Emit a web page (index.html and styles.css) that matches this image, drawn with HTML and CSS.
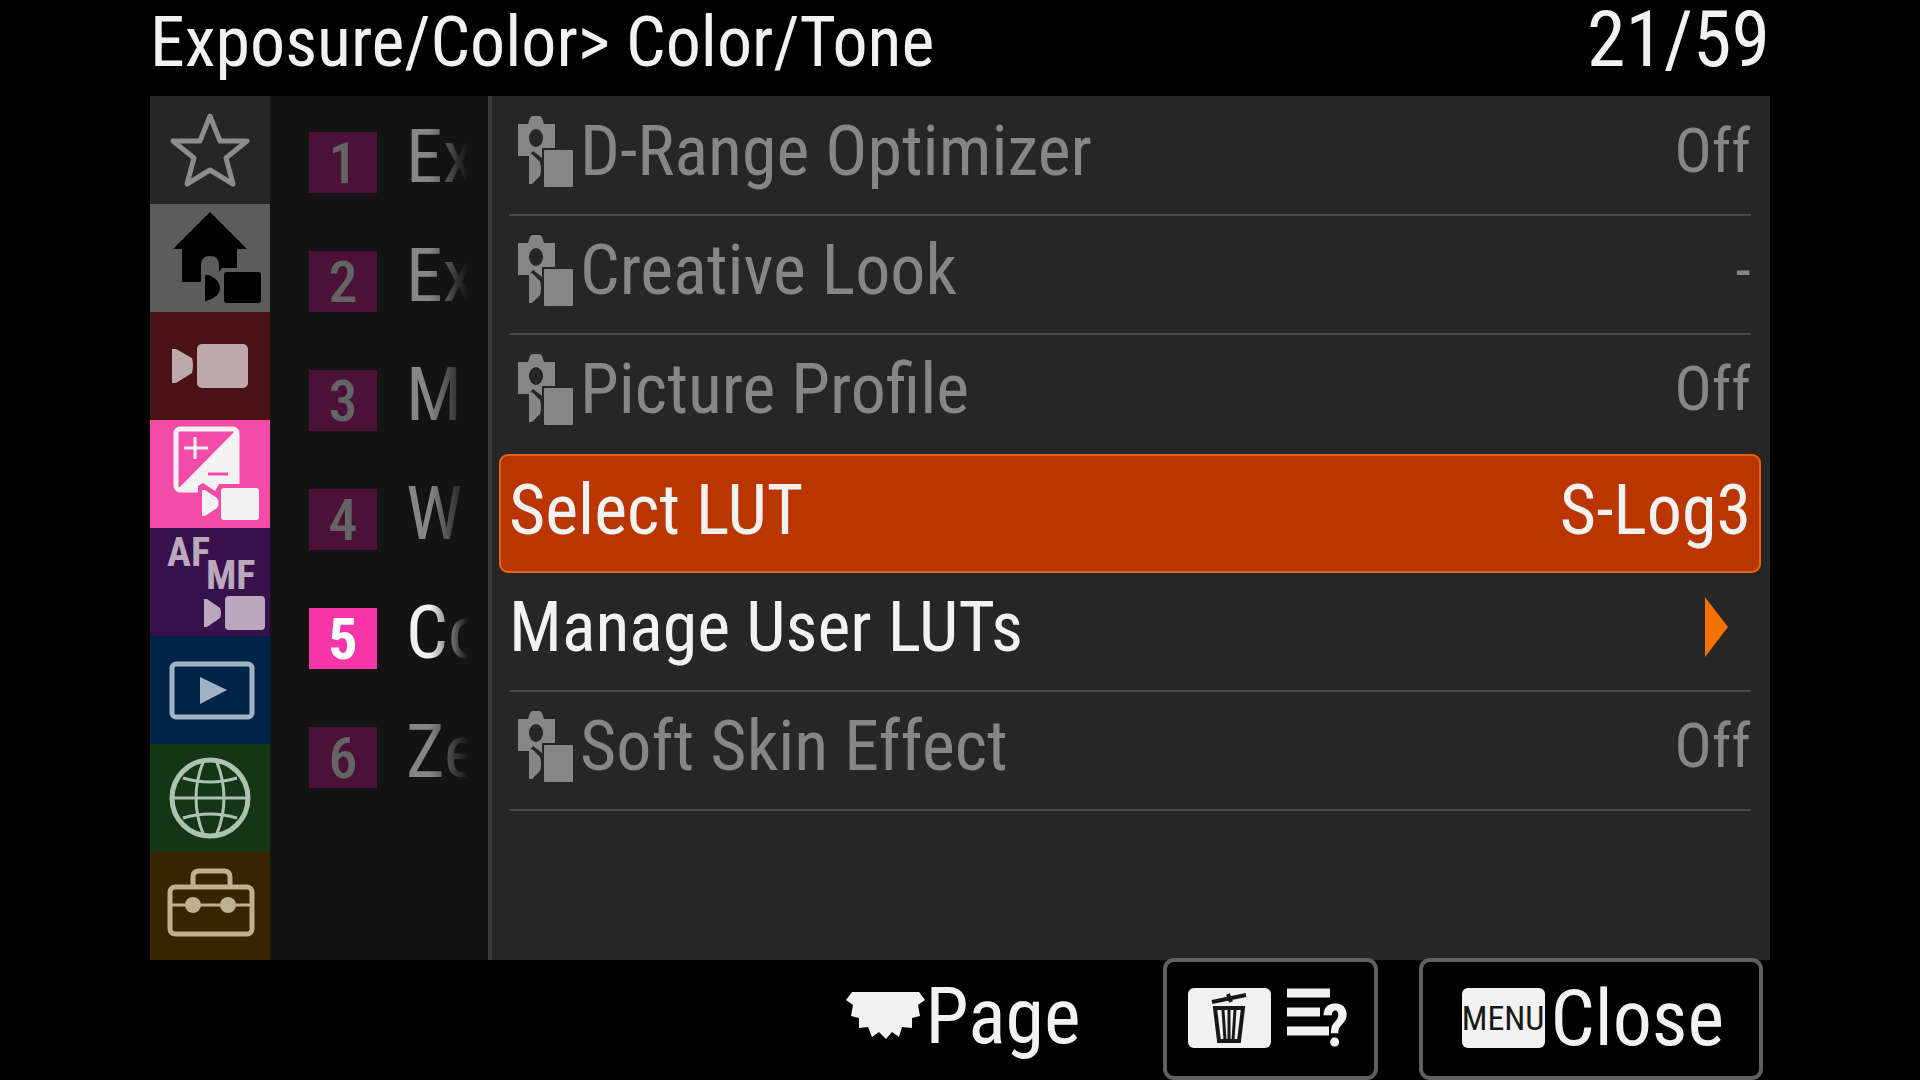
FILE: index.html
```html
<!DOCTYPE html>
<html lang="en">

<head>
    <meta charset="UTF-8">
    <meta name="viewport" content="width=device-width, initial-scale=1.0">
    <title>Exposure/Color</title>
    <link rel="stylesheet" href="styles.css">
</head>

<body>

    <!-- shared shapes -->
    <svg class="defs" aria-hidden="true">
        <symbol id="still-movie" viewBox="0 0 60 74">
            <path d="M3 10h10l2-6q1-2 3-2h6q2 0 3 2l2 6h11v24H27v10l-9-7-4 5H3z" fill="currentColor" />
            <ellipse cx="21" cy="24" rx="7" ry="9" fill="#262626" />
            <path d="M14 41l3-1 8 8q2 7 0 14l-8 8h-3z" fill="currentColor" />
            <rect x="29" y="36" width="29" height="37" rx="1" fill="currentColor" />
        </symbol>
    </svg>

    <div class="screen">
        <header class="header">
            <h1>Exposure/Color&gt; Color/Tone</h1>
            <span>21/59</span>
        </header>

        <main class="main">
            <nav class="tabs">
                <button class="tab tab-star" aria-label="My Menu">
                    <svg viewBox="0 0 120 108">
                        <path d="M60 20l10 25h27L76 62l7 26-23-14-23 14 7-26L23 45h27z" fill="none" stroke="currentColor" stroke-width="5" stroke-linejoin="round" />
                    </svg>
                </button>
                <button class="tab tab-home" aria-label="Main">
                    <svg viewBox="0 0 120 108">
                        <path d="M60 8l37 37H87v19H72l-3 4V61q0-9-9-9t-9 9v17H32V45H23z" fill="currentColor" />
                        <path d="M55 71l4 0q11 5 11 13t-11 12l-4 1z" fill="currentColor" />
                        <rect x="74" y="68" width="37" height="31" rx="3" fill="currentColor" />
                    </svg>
                </button>
                <button class="tab tab-movie" aria-label="Shooting">
                    <svg viewBox="0 0 120 108">
                        <path d="M22 37l4 0 16 9q2 8 0 15l-16 10h-4z" fill="currentColor" />
                        <rect x="47" y="32" width="51" height="44" rx="5" fill="currentColor" />
                    </svg>
                </button>
                <button class="tab tab-exposure" aria-label="Exposure/Color">
                    <svg viewBox="0 0 120 108">
                        <rect x="26" y="9" width="61" height="61" rx="4" fill="none" stroke="currentColor" stroke-width="5" />
                        <path d="M87 9v61H27z" fill="currentColor" />
                        <path d="M34 28h24M45 17v22" stroke="currentColor" stroke-width="3" />
                        <path d="M58 54h20" stroke="#f54ba8" stroke-width="3" />
                        <path d="M48 73v-7l5-3 12 8 4-7h24v40H48z" fill="#f54ba8" />
                        <path d="M52 70h3l12 8q3 5 0 10l-12 8h-3z" fill="currentColor" />
                        <rect x="71" y="68" width="38" height="32" rx="3" fill="currentColor" />
                    </svg>
                </button>
                <button class="tab tab-focus">
                    <svg viewBox="0 0 120 108">
                        <text x="17" y="38">AF</text>
                        <text x="56" y="61">MF</text>
                        <path d="M54 71h3l13 9q2 5 0 10l-13 9h-3z" fill="currentColor" />
                        <rect x="75" y="68" width="40" height="34" rx="4" fill="currentColor" />
                    </svg>
                </button>
                <button class="tab tab-playback" aria-label="Playback">
                    <svg viewBox="0 0 120 108">
                        <rect x="22" y="28" width="80" height="53" rx="4" fill="none" stroke="currentColor" stroke-width="5" />
                        <path d="M50 41l27 13-27 14z" fill="currentColor" />
                    </svg>
                </button>
                <button class="tab tab-network" aria-label="Network">
                    <svg viewBox="0 0 120 108">
                        <g fill="none" stroke="currentColor" stroke-width="3">
                            <circle cx="60" cy="54" r="38" stroke-width="5" />
                            <path d="M22 54h76M33 34q27 8 54 0M33 74q27-8 54 0" />
                            <path d="M54 16q-16 38 0 76M66 16q16 38 0 76" />
                        </g>
                    </svg>
                </button>
                <button class="tab tab-setup" aria-label="Setup">
                    <svg viewBox="0 0 120 108">
                        <g fill="none" stroke="currentColor" stroke-width="5">
                            <rect x="20" y="35" width="82" height="47" rx="5" />
                            <path d="M43 35V25q0-6 6-6h25q6 0 6 6v10" />
                            <path d="M20 53h82" stroke-width="3" />
                        </g>
                        <circle cx="43" cy="53" r="8" fill="currentColor" />
                        <circle cx="78" cy="53" r="8" fill="currentColor" />
                    </svg>
                </button>
            </nav>

            <nav class="groups">
                <button class="group"><b>1</b><span>Ex</span></button>
                <button class="group"><b>2</b><span>Ex</span></button>
                <button class="group"><b>3</b><span>M</span></button>
                <button class="group"><b>4</b><span>W</span></button>
                <button class="group active"><b>5</b><span>Co</span></button>
                <button class="group"><b>6</b><span>Ze</span></button>
            </nav>

            <section class="items">
                <button class="item dim">
                    <svg class="mode"><use href="#still-movie" /></svg>
                    <span class="label">D-Range Optimizer</span>
                    <span class="value">Off</span>
                </button>
                <button class="item dim">
                    <svg class="mode"><use href="#still-movie" /></svg>
                    <span class="label">Creative Look</span>
                    <span class="value">-</span>
                </button>
                <button class="item dim">
                    <svg class="mode"><use href="#still-movie" /></svg>
                    <span class="label">Picture Profile</span>
                    <span class="value">Off</span>
                </button>
                <button class="item selected">
                    <span class="label">Select LUT</span>
                    <span class="value">S-Log3</span>
                </button>
                <button class="item">
                    <span class="label">Manage User LUTs</span>
                    <svg class="arrow" viewBox="0 0 23 60"><path d="M0 0l23 30L0 60z" fill="#f57200" /></svg>
                </button>
                <button class="item dim">
                    <svg class="mode"><use href="#still-movie" /></svg>
                    <span class="label">Soft Skin Effect</span>
                    <span class="value">Off</span>
                </button>
            </section>
        </main>

        <footer class="footer">
            <div class="page">
                <svg class="dial" viewBox="0 0 79 48">
                    <path d="M6 0h67l6 8-7 5 2 11-8 2v10l-10-1-3 10-7-5-6 7-7-7-7 5-4-10-9 1V26l-8-2 2-11-7-5z" fill="currentColor" />
                </svg>
                <span>Page</span>
            </div>
            <button class="key">
                <span class="badge">
                    <svg class="trash" viewBox="0 0 36 52">
                        <path d="M1 10l34-7M17 2l3 8" stroke="currentColor" stroke-width="4" />
                        <path d="M4 16h28l-4 33H8z" fill="none" stroke="currentColor" stroke-width="4" />
                        <path d="M12 18l2 30M18 18v30M24 18l-2 30" stroke="currentColor" stroke-width="3" />
                    </svg>
                </span>
                <svg class="help" viewBox="0 0 62 76">
                    <path d="M0 13h43M0 32h33M0 51h42" stroke="currentColor" stroke-width="9" />
                    <text x="35" y="66">?</text>
                </svg>
            </button>
            <button class="key key-close">
                <span class="badge">MENU</span>
                <span>Close</span>
            </button>
        </footer>
    </div>

</body>

</html>
```
FILE: styles.css
```css
* {
    box-sizing: border-box;
}

body {
    margin: 0;
    background-color: #000;
    color: #f2f2f2;
    font-family: "Roboto Condensed", "Liberation Sans Narrow", sans-serif;
}

button {
    margin: 0;
    padding: 0;
    border: 0;
    background: none;
    color: inherit;
    font: inherit;
    text-align: left;
    cursor: pointer;
}

svg {
    display: block;
    flex: none;
}

.defs {
    position: absolute;
    width: 0;
    height: 0;
}

.screen {
    display: grid;
    grid-template-rows: 96px 1fr 120px;
    min-height: 100vh;
    padding: 0 150px;
}

.header {
    display: flex;
    justify-content: space-between;
    align-items: baseline;
    font-size: 78px;
    line-height: 80px;
}

.header h1 {
    margin: 0;
    font-size: 70px;
    font-weight: normal;
}

.main {
    display: grid;
    grid-template-columns: 120px 218px 1fr;
    background-color: #262626;
}

/* category tabs */
.tabs {
    display: flex;
    flex-direction: column;
}

.tab {
    flex: 1;
}

.tab svg {
    width: 100%;
}

.tab text {
    fill: currentColor;
    font-size: 40px;
    font-weight: bold;
}

.tab-star {
    color: #8c8c8c;
}

.tab-home {
    background-color: #5c5c5c;
    color: #000;
}

.tab-movie {
    background-color: #4a1214;
    color: #bca9aa;
}

.tab-exposure {
    background-color: #f54ba8;
    color: #f2f2f2;
}

.tab-focus {
    background-color: #38104b;
    color: #bba8bd;
}

.tab-playback {
    background-color: #002448;
    color: #9fb3c4;
}

.tab-network {
    background-color: #143614;
    color: #adc2b2;
}

.tab-setup {
    background-color: #382400;
    color: #bfb08e;
}

/* page groups */
.groups {
    background-color: #131313;
}

.group {
    display: flex;
    align-items: center;
    width: 100%;
    height: 119px;
    padding: 2px 0 0 39px;
    color: #868686;
    font-size: 74px;
}

.group b {
    width: 68px;
    height: 61px;
    margin: 12px 29px 0 0;
    background-color: #4b1138;
    color: #646464;
    font-size: 58px;
    font-weight: 500;
    line-height: 63px;
    text-align: center;
}

.group span {
    mask-image: linear-gradient(to right, #000 24px, transparent 62px);
}

.group.active {
    color: #f2f2f2;
}

.group.active b {
    background-color: #f535a8;
    color: #fff;
    font-weight: bold;
}

/* setting rows */
.items {
    padding-top: 1px;
    border-left: 4px solid #393939;
}

.item {
    display: flex;
    align-items: center;
    width: calc(100% - 36px);
    height: 119px;
    margin: 0 19px 0 17px;
    padding-bottom: 10px;
    border-bottom: 2px solid #484848;
    font-size: 70px;
}

.item.dim {
    color: #868686;
}

.item:has(+ .selected) {
    border-color: transparent;
}

.item.selected {
    width: calc(100% - 16px);
    margin: 0 9px 0 7px;
    padding: 0 8px 8px;
    border: 2px solid #e8640c;
    border-radius: 9px;
    background-color: #b93600;
}

.mode {
    width: 60px;
    height: 74px;
    margin: 0 5px 0 6px;
}

.value {
    margin-left: auto;
}

.dim .value {
    font-size: 62px;
}

.arrow {
    width: 23px;
    height: 60px;
    margin: 0 23px 0 auto;
}

/* key hints */
.footer {
    display: flex;
    justify-content: flex-end;
    margin-top: -2px;
    padding-right: 7px;
    font-size: 78px;
}

.page {
    display: flex;
    align-items: center;
    margin-right: 82px;
    padding-bottom: 6px;
}

.dial {
    width: 79px;
    height: 48px;
}

.key {
    display: flex;
    align-items: center;
    gap: 16px;
    height: 122px;
    padding: 0 25px 2px 21px;
    border: 4px solid #606060;
    border-radius: 11px;
    background-color: #000;
}

.key-close {
    gap: 6px;
    margin-left: 41px;
    padding: 0 35px 2px 39px;
}

.badge {
    display: flex;
    justify-content: center;
    align-items: center;
    width: 83px;
    height: 60px;
    border-radius: 6px;
    background-color: #f2f2f2;
    color: #181818;
    font-size: 34px;
}

.trash {
    width: 36px;
    height: 52px;
}

.help {
    width: 62px;
    height: 76px;
}

.help text {
    fill: currentColor;
    font-size: 60px;
    font-weight: bold;
}
```
